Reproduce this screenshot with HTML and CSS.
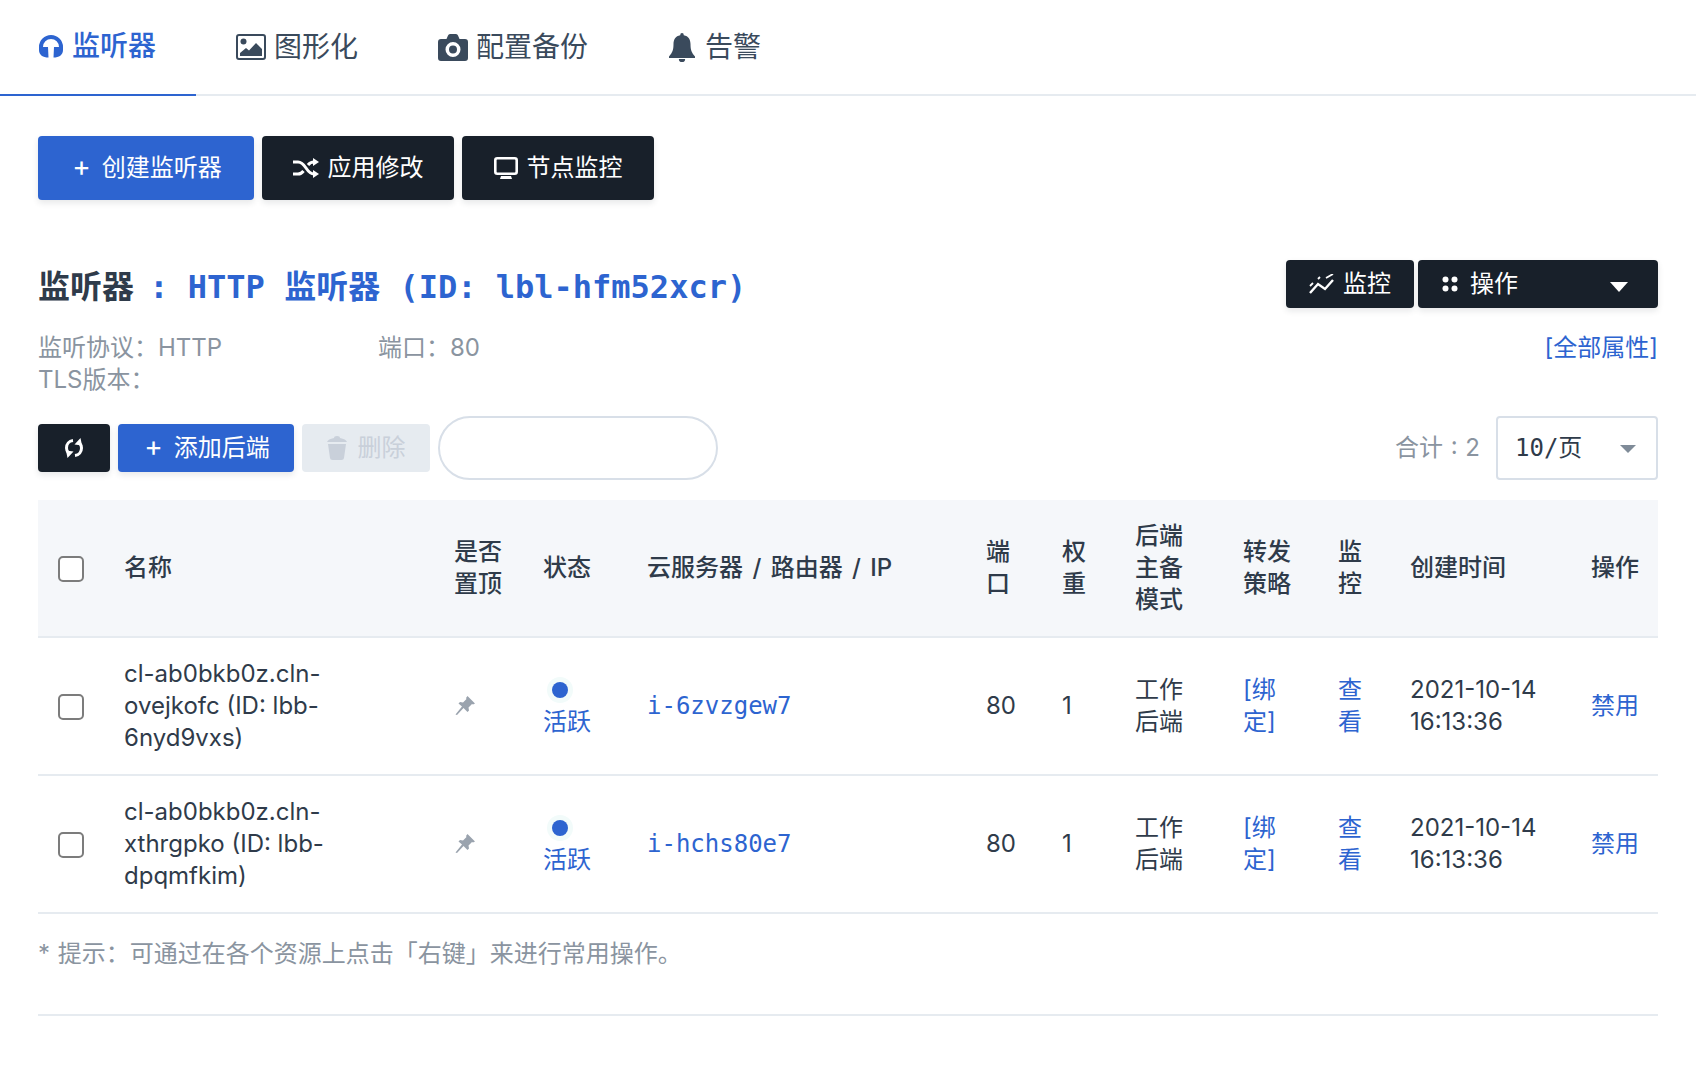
FILE: index.html
```html
<!DOCTYPE html>
<html lang="zh-CN">
<head>
  <meta charset="UTF-8">
  <title>监听器</title>
  <link rel="stylesheet" href="styles.css">
</head>
<body>
  <nav class="tabs">
    <a class="tab first active">
      <svg class="tab-icon" width="26" height="24" viewBox="0 0 26 24"><path d="M3 16v-3a10 10 0 0 1 20 0v3" fill="none" stroke="currentColor" stroke-width="4"/><path d="M1 13h9l.5 10.500C5 23.500 1 21 1 16zM25 13h-9l-.5 10.500C21 23.500 25 21 25 16z" fill="currentColor"/></svg>
      监听器
    </a>
    <a class="tab">
      <svg class="tab-icon" width="30" height="26" viewBox="0 0 30 26"><rect x="1" y="1" width="28" height="24" rx="2" fill="none" stroke="currentColor" stroke-width="2"/><circle cx="7.500" cy="7.500" r="3" fill="currentColor"/><path d="M4 22v-3l6-5 3 2.500L20 9l6 6v7z" fill="currentColor"/></svg>
      图形化
    </a>
    <a class="tab">
      <svg class="tab-icon" width="30" height="27" viewBox="0 0 30 27"><path fill-rule="evenodd" d="M3 5h5.500l1.500-3.500q.5-1.500 2-1.500h6q1.500 0 2 1.500L21.500 5H27q3 0 3 3v16q0 3-3 3H3q-3 0-3-3V8q0-3 3-3zM15 8a7.500 7.500 0 1 0 0 15 7.500 7.500 0 0 0 0-15zm0 3.500a4 4 0 1 1 0 8 4 4 0 0 1 0-8z" fill="currentColor"/></svg>
      配置备份
    </a>
    <a class="tab">
      <svg class="tab-icon tab-bell" width="26" height="29" viewBox="0 0 26 29"><path d="M13 0q1.800 0 1.800 2.200C19.500 3 21.500 6.500 21.500 11c0 6 1 8.500 4.500 12.500v1.500H0v-1.500C3.500 19.500 4.500 17 4.500 11c0-4.500 2-8 6.700-8.800Q11.200 0 13 0zM9.800 26h6.400a3.200 3.200 0 0 1-6.400 0z" fill="currentColor"/></svg>
      告警
    </a>
  </nav>

  <main class="page">
    <div class="actions">
      <button class="btn btn-blue btn-big"><span class="plus">+</span>创建监听器</button>
      <button class="btn btn-dark btn-big">
        <svg width="26" height="20" viewBox="0 0 26 20" fill="none" stroke="#fff" stroke-width="3"><path d="M0 4h5c4 0 6 3 8 6s4 6 8 6h1M0 16h5c2.500 0 4-1 5.500-3M15 7c1.500-2 3.500-3 6-3h1"/><path d="M20 0l6 4-6 4zM20 12l6 4-6 4z" fill="#fff" stroke="none"/></svg>
        应用修改
      </button>
      <button class="btn btn-dark btn-big">
        <svg width="24" height="22" viewBox="0 0 24 22"><rect x="1.300" y="1.300" width="21.400" height="15.400" rx="2" fill="none" stroke="#fff" stroke-width="2.600"/><path d="M7 19h10l1 3H6z" fill="#fff"/></svg>
        节点监控
      </button>
    </div>

    <div class="title-row">
      <h1 class="title">监听器 <span class="title-blue">: HTTP 监听器 (ID: lbl-hfm52xcr)</span></h1>
      <div class="title-btns">
        <button class="btn btn-dark btn-mon">
          <svg width="25" height="20" viewBox="0 0 25 20" fill="none" stroke="#fff" stroke-width="2.400"><path d="M1 19l8-9 7 5 8-9"/><path d="M1 12l3-3M9 5l2-2M17 4l7-4" stroke-width="1.800"/></svg>
          监控
        </button>
        <button class="btn btn-dark btn-ops">
          <span class="ops-left">
            <svg width="16" height="16" viewBox="0 0 16 16" fill="#fff"><circle cx="3.500" cy="3.500" r="3"/><circle cx="12.500" cy="3.500" r="3"/><circle cx="3.500" cy="12.500" r="3"/><circle cx="12.500" cy="12.500" r="3"/></svg>
            操作
          </span>
          <span class="caret caret-white"></span>
        </button>
      </div>
    </div>

    <div class="meta">
      <div class="meta-info">
        <div class="meta-line"><span class="meta-proto">监听协议：HTTP</span><span>端口：80</span></div>
        <div>TLS版本：</div>
      </div>
      <a class="link">[全部属性]</a>
    </div>

    <div class="toolbar">
      <div class="toolbar-left">
        <button class="btn btn-dark btn-refresh">
          <svg width="20" height="22" viewBox="0 0 20 22" fill="none" stroke="#fff" stroke-width="3"><path d="M9 3.500C5 4 2.500 7 2.500 11c0 1.800.6 3.400 1.800 4.600"/><path d="M11 18.500c4-.5 6.500-3.500 6.500-7.500 0-1.800-.6-3.400-1.800-4.600"/><path d="M2 13.500l7.500 1-6 6.500zM18 8.500l-7.500-1 6-6.500z" fill="#fff" stroke="none"/></svg>
        </button>
        <button class="btn btn-blue btn-add"><span class="plus">+</span>添加后端</button>
        <button class="btn btn-off">
          <svg width="20" height="24" viewBox="0 0 20 24" fill="#c9d0da"><path d="M1 8h18l-2 14q-.2 2-2.500 2h-9Q3.200 24 3 22z"/><path d="M7 2q0-2 3-2t3 2q6 1 7 4H0q1-3 7-4z"/></svg>
          删除
        </button>
        <input class="search" type="text">
      </div>
      <div class="toolbar-right">
        <span class="total">合计 : 2</span>
        <div class="select"><span class="select-val">10/页</span><span class="caret caret-grey"></span></div>
      </div>
    </div>

    <table class="list">
      <colgroup>
        <col class="c-check"><col class="c-name"><col class="c-top"><col class="c-state"><col class="c-server">
        <col class="c-port"><col class="c-weight"><col class="c-mode"><col class="c-policy"><col class="c-mon">
        <col class="c-time"><col class="c-op">
      </colgroup>
      <thead>
        <tr>
          <th class="cell-check"><input class="check" type="checkbox"></th>
          <th>名称</th>
          <th>是否置顶</th>
          <th>状态</th>
          <th class="spaced">云服务器 / 路由器 / IP</th>
          <th>端口</th>
          <th>权重</th>
          <th>后端主备模式</th>
          <th>转发策略</th>
          <th>监控</th>
          <th>创建时间</th>
          <th>操作</th>
        </tr>
      </thead>
      <tbody>
        <tr>
          <td class="cell-check"><input class="check" type="checkbox"></td>
          <td><div class="name">cl-ab0bkb0z.cln-ovejkofc (ID: lbb-6nyd9vxs)</div></td>
          <td><svg class="pin" width="20" height="20" viewBox="0 0 20 20"><path d="M12.500 0L20 7.500l-2 1-1-.5-3.500 3.500.5 3-1.500 1.500L8.500 12 2 19l-1.500-.5L7 10.500 3.500 7.500 5 6l3 .5L11.500 3 11 2z"/></svg></td>
          <td class="state"><span class="dot"></span><br>活跃</td>
          <td><a class="link mono">i-6zvzgew7</a></td>
          <td>80</td>
          <td>1</td>
          <td>工作后端</td>
          <td><a class="link">[绑定]</a></td>
          <td><a class="link">查看</a></td>
          <td>2021-10-14 16:13:36</td>
          <td><a class="link">禁用</a></td>
        </tr>
        <tr>
          <td class="cell-check"><input class="check" type="checkbox"></td>
          <td><div class="name">cl-ab0bkb0z.cln-xthrgpko (ID: lbb-dpqmfkim)</div></td>
          <td><svg class="pin" width="20" height="20" viewBox="0 0 20 20"><path d="M12.500 0L20 7.500l-2 1-1-.5-3.500 3.500.5 3-1.500 1.500L8.500 12 2 19l-1.500-.5L7 10.500 3.500 7.500 5 6l3 .5L11.500 3 11 2z"/></svg></td>
          <td class="state"><span class="dot"></span><br>活跃</td>
          <td><a class="link mono">i-hchs80e7</a></td>
          <td>80</td>
          <td>1</td>
          <td>工作后端</td>
          <td><a class="link">[绑定]</a></td>
          <td><a class="link">查看</a></td>
          <td>2021-10-14 16:13:36</td>
          <td><a class="link">禁用</a></td>
        </tr>
      </tbody>
    </table>

    <p class="hint">* 提示：可通过在各个资源上点击「右键」来进行常用操作。</p>
  </main>
</body>
</html>
```

FILE: styles.css
```css
* {
  box-sizing: border-box;
}

body {
  margin: 0;
  background: #fff;
  color: #2f3b4a;
  font-family: "Inter", "Noto Sans CJK SC", sans-serif;
  font-size: 24px;
  line-height: 32px;
}

/* top tabs */
.tabs {
  display: flex;
  height: 96px;
  border-bottom: 2px solid #e6ebf0;
}

.tab {
  display: flex;
  align-items: center;
  gap: 8px;
  height: 96px;
  padding: 0 40px 2px;
  color: #3a4a5c;
  font-size: 28px;
}

.tab.first {
  padding-left: 38px;
}

.tab.active {
  color: #2d64d0;
  font-weight: 500;
  border-bottom: 2px solid #2d64d0;
}

.tab-icon {
  flex: none;
}

.tab-bell {
  margin: 0 2px 0 1px;
}

.page {
  padding: 40px 38px 0;
}

/* buttons */
.btn {
  display: inline-flex;
  align-items: center;
  justify-content: center;
  gap: 9px;
  border: 0;
  border-radius: 4px;
  padding: 0;
  color: #fff;
  font: inherit;
  box-shadow: 0 3px 6px rgba(24, 32, 42, 0.1);
}

.btn-blue {
  background: #2d64d0;
}

.btn-dark {
  background: #18202a;
}

.btn-big {
  width: 192px;
  height: 64px;
}

.btn-big.btn-blue {
  width: 216px;
}

.plus {
  margin: 0 2px;
  padding-bottom: 4px;
  font-size: 28px;
}

.actions {
  display: flex;
  gap: 8px;
}

/* title */
.title-row {
  display: flex;
  justify-content: space-between;
  align-items: center;
  margin-top: 60px;
  height: 48px;
}

.title {
  margin: 6px 0 0;
  color: #2f3b4a;
  font-family: "DejaVu Sans Mono", "Noto Sans CJK SC", monospace;
  font-size: 32px;
  font-weight: 700;
  line-height: 48px;
}

.title-blue {
  margin-left: -4px;
  color: #2d64d0;
}

.title-btns {
  display: flex;
  gap: 4px;
}

.btn-mon {
  width: 128px;
  height: 48px;
}

.btn-ops {
  justify-content: space-between;
  width: 240px;
  height: 48px;
  padding: 0 30px 0 24px;
}

.ops-left {
  display: flex;
  align-items: center;
  gap: 12px;
}

.caret {
  border-left: 9px solid transparent;
  border-right: 9px solid transparent;
  border-top: 10px solid #fff;
}

.caret-white {
  margin-top: 6px;
}

.caret-grey {
  margin-top: 2px;
  border-left-width: 8px;
  border-right-width: 8px;
  border-top: 8px solid #7f8b98;
}

/* meta info */
.meta {
  display: flex;
  justify-content: space-between;
  margin-top: 24px;
  color: #8a94a0;
}

.meta-line {
  display: flex;
}

.meta-proto {
  width: 340px;
}

.link {
  color: #2d64d0;
}

/* table toolbar */
.toolbar {
  display: flex;
  justify-content: space-between;
  align-items: center;
  margin-top: 20px;
}

.toolbar-left,
.toolbar-right {
  display: flex;
  align-items: center;
  gap: 8px;
}

.toolbar-right {
  gap: 16px;
}

.btn-refresh {
  width: 72px;
  height: 48px;
}

.btn-add {
  width: 176px;
  height: 48px;
}

.btn-off {
  gap: 11px;
  width: 128px;
  height: 48px;
  color: #c9d0da;
  background: #e6ebf0;
  box-shadow: none;
}

.search {
  width: 280px;
  height: 64px;
  border: 2px solid #d8dfe8;
  border-radius: 32px;
  background: #fff;
}

.total {
  color: #8a94a0;
  word-spacing: 1px;
}

.select {
  display: flex;
  justify-content: space-between;
  align-items: center;
  width: 162px;
  height: 64px;
  padding: 0 20px 0 17px;
  border: 2px solid #d8dfe8;
  border-radius: 4px;
}

.select-val {
  font-family: "DejaVu Sans Mono", "Noto Sans CJK SC", monospace;
}

/* table */
.list {
  width: 100%;
  margin-top: 20px;
  border-collapse: collapse;
  table-layout: fixed;
}

.list th,
.list td {
  padding: 20px;
  text-align: left;
  vertical-align: middle;
  border-bottom: 2px solid #e6ebf0;
}

.list th {
  background: #f5f7fa;
  font-weight: 500;
}

.list th:last-child,
.list td:last-child {
  padding-right: 0;
}

.spaced {
  word-spacing: 3px;
}

.c-check { width: 66px; }
.c-name { width: 330px; }
.c-top { width: 89px; }
.c-state { width: 104px; }
.c-server { width: 339px; }
.c-port { width: 76px; }
.c-weight { width: 73px; }
.c-mode { width: 108px; }
.c-policy { width: 95px; }
.c-mon { width: 72px; }
.c-time { width: 181px; }
.c-op { width: 87px; }

.cell-check {
  padding-right: 0;
}

.check {
  display: block;
  appearance: none;
  width: 26px;
  height: 26px;
  margin: 2px 0 0;
  border: 2px solid #7c7c7c;
  border-radius: 5px;
  background: #fff;
}

.name {
  max-width: 250px;
}

.pin {
  display: block;
  margin-left: 1px;
  fill: #9aa3ae;
}

.state {
  color: #2d64d0;
}

.dot {
  display: inline-block;
  width: 16px;
  height: 16px;
  margin-left: 9px;
  border-radius: 50%;
  background: #2d64d0;
  box-shadow: 0 0 0 5px #f2fbfa;
}

.mono {
  font-family: "DejaVu Sans Mono", "Noto Sans CJK SC", monospace;
}

.hint {
  margin: 0;
  padding: 24px 0 44px;
  color: #8a94a0;
  word-spacing: 1px;
  border-bottom: 2px solid #e6ebf0;
}
```
